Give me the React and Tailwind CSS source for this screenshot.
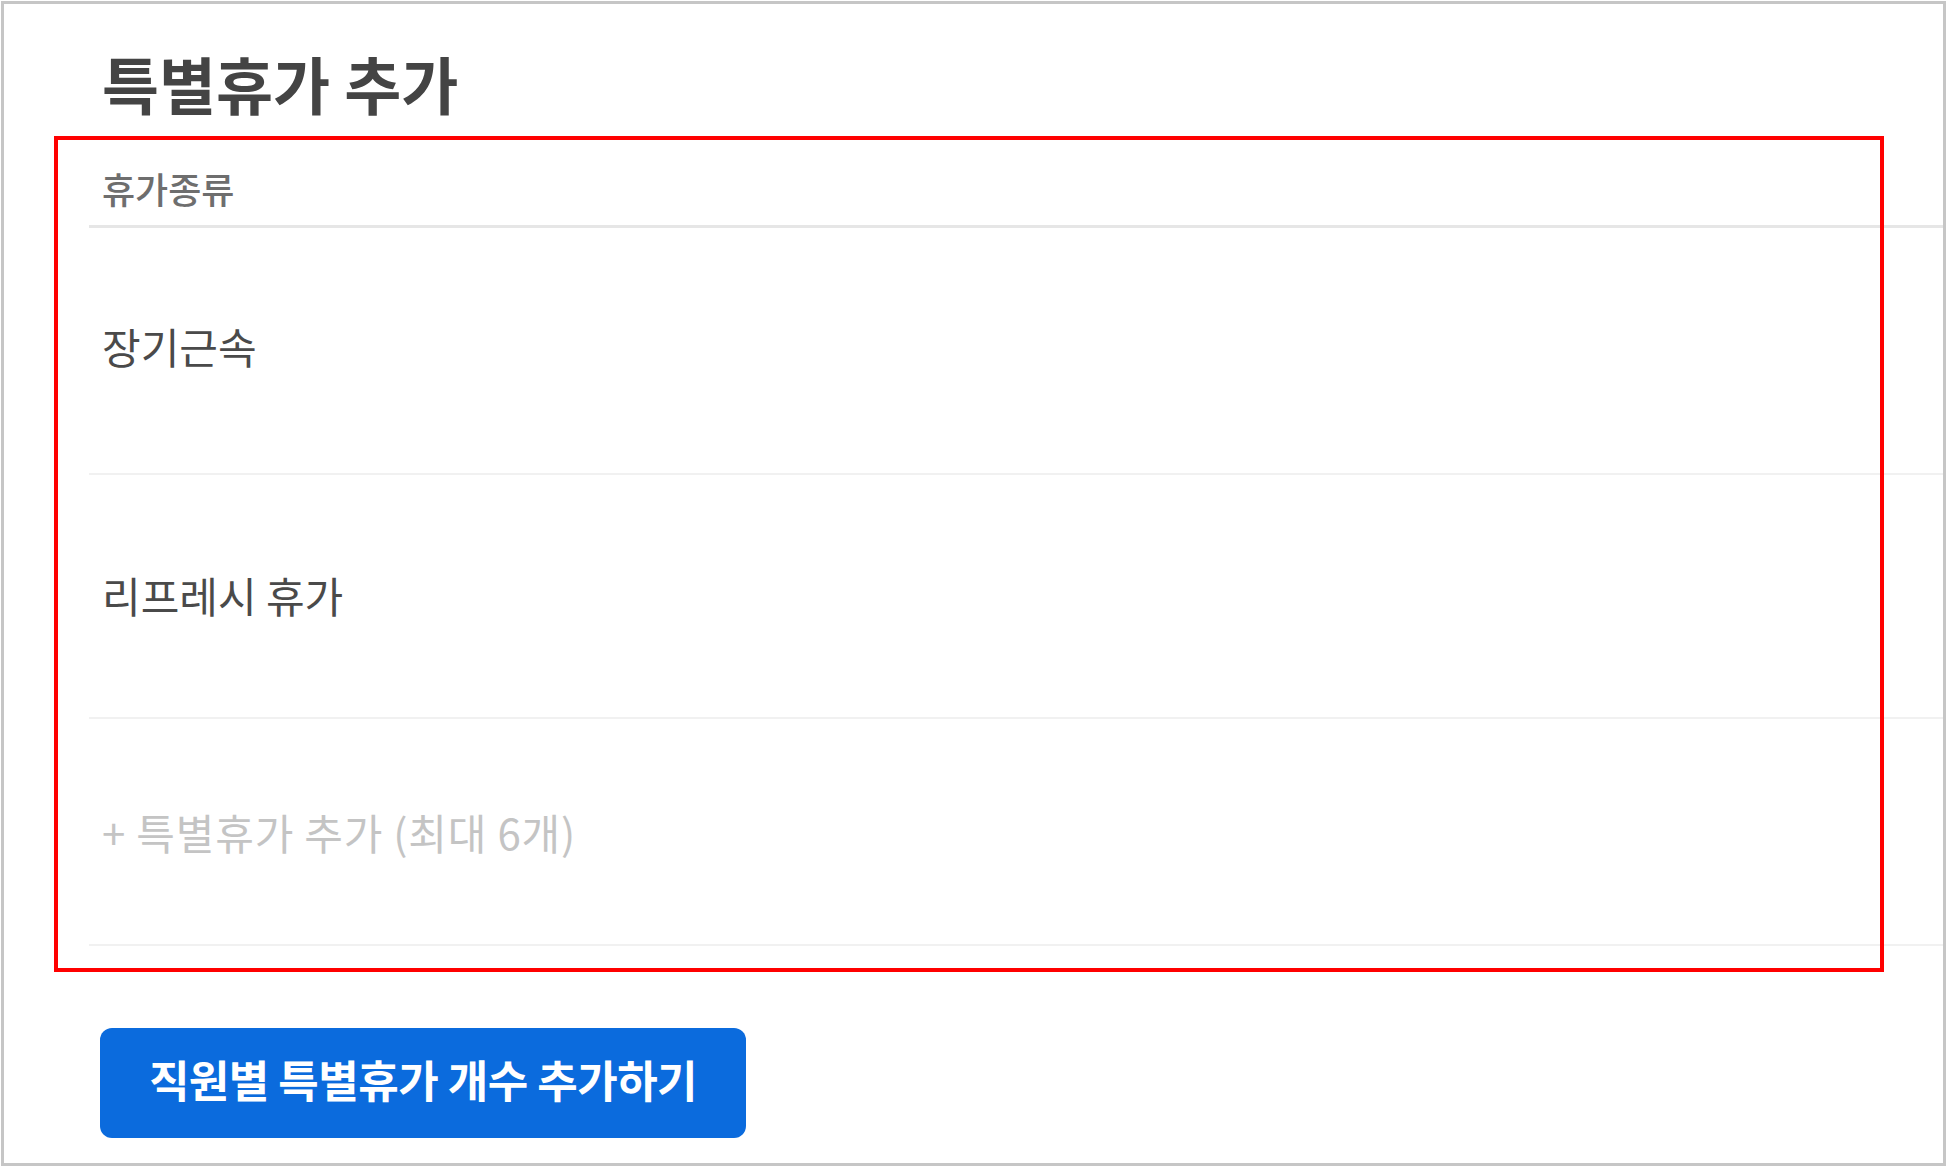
import React from "react";

const rows = [
  { label: "장기근속", cls: "h-[247px] pb-[10px]" },
  { label: "리프레시 휴가", cls: "h-[244px] pb-[2px]" },
];

export default function App() {
  return (
    <div
      className="relative w-[1947px] h-[1167px] bg-white p-[1px]"
      style={{ fontFamily: '"Noto Sans CJK KR", "Noto Sans", sans-serif' }}
    >
      <div className="w-full h-full border-[3px] border-[#c6c6c6] flex flex-col">
        <h1 className="mt-[43px] ml-[98px] text-[62px] leading-[72px] font-bold text-[#444444]">
          특별휴가 추가
        </h1>

        <div className="mt-[42px] ml-[85px]">
          <div className="h-[67px] flex items-center pb-[11px] pl-[13px] border-b-[3px] border-[#e6e6e6]">
            <span className="text-[36px] font-medium text-[#6e6e6e] leading-none">
              휴가종류
            </span>
          </div>

          {rows.map((r) => (
            <div
              key={r.label}
              className={`${r.cls} flex items-center pl-[13px] border-b-2 border-[#f1f1f1]`}
            >
              <span className="text-[42px] text-[#4a4a4a] leading-none">
                {r.label}
              </span>
            </div>
          ))}

          <div className="h-[227px] flex items-center pl-[13px] border-b-2 border-[#f1f1f1]">
            <span className="text-[42px] text-[#c4c4c4] tracking-[0.8px] leading-none">
              + 특별휴가 추가 (최대 6개)
            </span>
          </div>
        </div>

        <div className="mt-[82px] ml-[96px]">
          <button className="w-[646px] h-[110px] pb-[8px] rounded-[12px] bg-[#0b6bdd] text-white text-[44px] font-bold tracking-[-0.5px] flex items-center justify-center">
            직원별 특별휴가 개수 추가하기
          </button>
        </div>
      </div>

      {/* annotation box */}
      <div className="absolute left-[54px] top-[136px] w-[1830px] h-[836px] border-4 border-[#ff0000] pointer-events-none" />
    </div>
  );
}
